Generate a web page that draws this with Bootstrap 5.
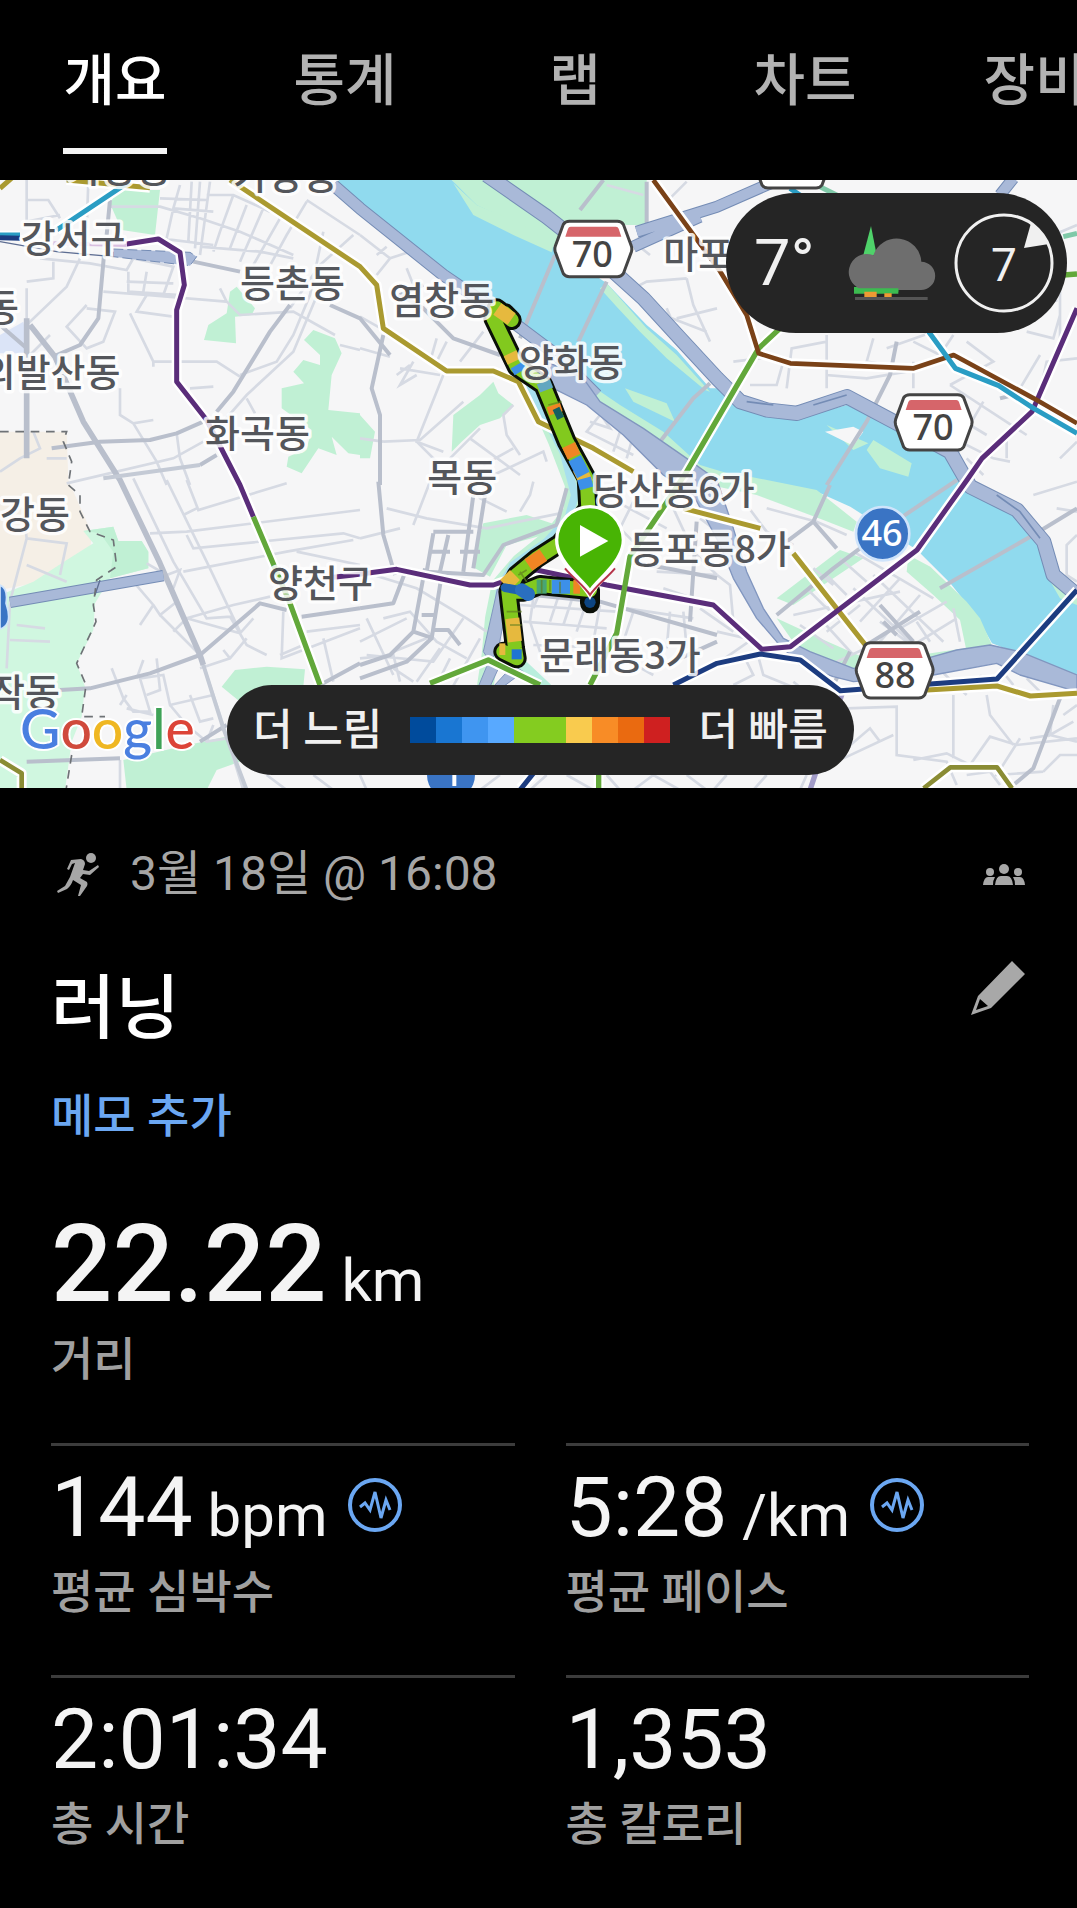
<!DOCTYPE html>
<html lang="ko" data-bs-theme="dark">
<head>
<meta charset="utf-8">
<meta name="viewport" content="width=device-width, initial-scale=1">
<title>러닝</title>
<link rel="stylesheet" href="https://cdn.jsdelivr.net/npm/bootstrap@5.3.0/dist/css/bootstrap.min.css">
<style>
  body { background: #000; color: #f4f4f4; font-family: Roboto, "Noto Sans CJK KR", sans-serif; overflow-x: hidden; }
  .tab-strip { height: 180px; overflow: hidden; }
  .tab-strip .nav-item { flex: 0 0 230px; }
  .tab-strip .nav-link { color: #b2b2b2; font-size: 56px; font-weight: 500; line-height: 84px; padding: 39px 0 25px; border-bottom: 6px solid transparent; border-radius: 0; }
  .tab-strip .nav-link.active { color: #fff; border-bottom-color: #f4f4f4; }
  .map-pane { height: 608px; }
  .map-pane .map-art { display: block; width: 100%; height: 100%; }
  .pill { background: #252525; color: #f0f0f0; border-radius: 70px; }
  .weather { top: 13px; right: 10px; height: 140px; padding: 0 12px 0 28px; gap: 17px; }
  .weather .temp { font-size: 65px; line-height: 70px; width: 75px; }
  .legend { left: 227px; bottom: 13px; height: 90px; padding: 0 26px; gap: 28px; font-size: 43px; font-weight: 500; line-height: 60px; white-space: nowrap; }
  .legend .scale-cell { width: 26px; height: 26px; }
  .details { padding: 47px 48px 40px 51px; }
  .meta-row { color: #a6a6a6; font-size: 48px; line-height: 78px; }
  .meta-row .runner { margin: 0 29px 0 6px; }
  .title-row h1 { font-size: 70px; line-height: 96px; margin: 0; font-weight: 500; }
  .memo-link { color: #6ba7f2; font-size: 46px; font-weight: 500; line-height: 70px; text-decoration: none; }
  .stat-label { color: #a0a0a0; font-size: 46px; font-weight: 500; line-height: 70px; margin: 0; }
  .stat-unit { font-size: 60px; line-height: 60px; }
  .stat-main { font-size: 108px; line-height: 120px; font-weight: 500; margin-top: 53px; }
  .stat-main .stat-unit { font-weight: 400; }
  .stat-value { font-size: 84px; line-height: 98px; }
  .stat-grid { --bs-gutter-x: 51px; margin-top: 49px; }
  .stat-cell { border-top: 3px solid #3c3c3c; height: 232px; padding-top: 13px; }
  .pulse { width: 54px; height: 54px; margin-left: 20px; margin-bottom: 6px; }
  .icon-btn { background: none; border: 0; padding: 0; line-height: 0; color: #a8a8a8; }
  .lbl text { font-family: "Noto Sans CJK KR", sans-serif; font-size: 114px; font-weight: 500; fill: #54565b; stroke: #fff; stroke-width: 20px; stroke-opacity: .85; stroke-linejoin: round; paint-order: stroke; }
  .shield text { font-family: "Noto Sans", sans-serif; font-size: 108px; font-weight: 500; fill: #444; text-anchor: middle; }
  .google text { font-family: Lato, sans-serif; font-size: 166px; font-weight: 500; stroke: #fff; stroke-width: 12px; paint-order: stroke; }
</style>
</head>
<body>
<nav class="tab-strip">
  <ul class="nav flex-nowrap">
    <li class="nav-item d-flex justify-content-center"><a class="nav-link active" aria-current="page" href="#">개요</a></li>
    <li class="nav-item d-flex justify-content-center"><a class="nav-link" href="#">통계</a></li>
    <li class="nav-item d-flex justify-content-center"><a class="nav-link" href="#">랩</a></li>
    <li class="nav-item d-flex justify-content-center"><a class="nav-link" href="#">차트</a></li>
    <li class="nav-item d-flex justify-content-center"><a class="nav-link text-nowrap" href="#">장비</a></li>
  </ul>
</nav>

<section class="map-pane position-relative overflow-hidden">
<svg class="map-art" viewBox="0 15 3231 1824" preserveAspectRatio="xMidYMid slice" fill="none" role="img" aria-label="러닝 경로 지도">
  <defs>
    <g id="hex"><path d="M-72-83H72Q84-83 90-74L114-9Q117 0 114 9L90 74Q84 83 72 83H-72Q-84 83-90 74L-114 9Q-117 0-114-9L-90-74Q-84-83-72-83Z" fill="#fff" stroke="#444" stroke-width="9"/><path d="M-68-67H68Q74-67 76-61L84-37H-84L-76-61Q-74-67-68-67Z" fill="#d6656a"/></g>
  </defs>
  <rect y="0" width="3231" height="1860" fill="#f6f6f7"/>
  <!-- districts and parks -->
  <path d="M0 770H200L205 915 275 1075 270 1140 100 1225 0 1245Z" fill="#f5efe6"/>
  <path d="M0 480 70 440 85 500 70 535H0Z" fill="#dbe4f7"/>
  <path d="M0 1260 100 1220 200 1155 280 1105 250 1068 340 1055 355 1098 425 1098 445 1130V1180L330 1210 285 1285 280 1365 230 1465 255 1535 245 1625 215 1700 195 1845H0Z" fill="#d0f7e0"/>
  <g fill="#c0f0d4">
    <path d="M250 1068 340 1055 355 1098 425 1098 445 1130V1180L330 1210 340 1130 300 1075ZM345 45H480L465 180 365 165 332 90ZM710 335 765 400 755 420 705 425 708 505 612 495 625 450 680 415 690 350ZM940 465 1005 490 1025 535 995 600 985 705 1080 715V840L1045 835 995 785 1010 840 955 820 905 895 860 875 865 845 920 820 935 765 845 700V640L912 625 880 590 910 555 960 570V540L912 495Z"/>
    <path d="M1080 720 1125 770 1110 850H1080ZM1360 720 1400 690 1440 660 1480 620 1495 655 1540 690 1500 730 1440 750 1385 800 1355 830ZM1450 1045 1580 1020 1670 1050 1650 1075 1520 1110 1470 1205 1425 1180 1430 1110ZM665 1535 705 1485 800 1475 915 1483 910 1535 720 1580ZM370 1755 520 1720 700 1680 720 1760 650 1785 620 1845H380Z"/>
    <path d="M1355 15H1940V150L1700 150 1660 215 1560 150 1430 100Z"/>
  </g>
  <!-- river -->
  <path d="M1005 15H1355L1430 90 1560 150 1660 215 1820 325 1940 450 2030 525 2130 640 2151 640 2200 690 2280 720 2376 735 2541 690 2690 760 2850 830 2890 900 2950 960 3050 1030 3120 1110 3150 1190 3231 1265V1505L2976 1405 2931 1325 2851 1225 2751 1125 2551 995 2451 950 2311 920 2151 900 2050 850 1930 760 1790 650 1670 540 1550 460 1330 290 1080 100Z" fill="#90daee"/>
  <g fill="#c0f0d4">
    <path d="M1360 25 1430 90 1560 145 1660 212 1655 232 1540 180 1420 120Z"/>
    <path d="M1820 325 1940 460 2030 540 2130 650 2115 645 2000 550 1920 470 1850 395 1800 340Z"/>
    <path d="M1750 615 1860 690 1990 770 2100 870 2200 900 2250 905 2450 945 2570 1040 2560 1070 2470 1035 2270 960 2130 930 1900 800 1790 680Z"/>
    <path d="M1875 640 2000 685 2025 740 1900 680Z"/>
    <path d="M2600 825 2620 795 2735 865 2725 905 2640 880ZM2480 750 2605 805 2560 825Z"/>
    <path d="M2725 1140 2791 1175 2900 1280 2940 1330 2980 1420 2900 1430 2880 1335 2800 1260 2720 1190ZM2330 1270 2520 1125 2590 1150 2380 1290ZM2330 1330 2460 1390 2620 1460 2960 1410 2980 1430 2640 1510 2500 1490 2400 1430ZM3140 1200 3180 1240 3231 1255V1290L3180 1270Z"/>
  </g>
  <path d="M2475 770 2560 755 2590 770 2560 812Z" fill="#f6f6f7"/>
  <!-- stream beside the running path -->
  <g stroke-linecap="round" stroke-linejoin="round">
    <path d="M1600 640 1670 800 1720 930 1715 1010 1660 1080 1560 1160 1500 1230 1480 1330 1470 1440 1455 1540" stroke="#c0f0d4" stroke-width="50"/>
    <path d="M1590 640 1690 830 1725 960 1705 1030 1640 1100 1540 1170 1500 1240 1490 1330 1475 1440" stroke="#a8dfee" stroke-width="24"/>
    <path d="M1565 1470 1640 1540" stroke="#b9eedd" stroke-width="34"/>
  </g>
  <!-- minor streets -->
  <g stroke="#d6dae3" stroke-width="8">
    <path d="M80 15V140L180 120M80 75H145L180 130M265 20 260 160M330 95H480L600 130 720 170 880 240M540 30 520 100 500 190M575 20 565 200M600 20 585 220M630 20 600 240M480 70 620 75M480 190 640 210M520 100 640 110M700 60 660 170 640 230M740 90 690 220M790 100 720 260M840 130 760 270M920 80 860 180 800 290M1060 180 960 270 870 400M880 250 780 230 600 215M920 75 1080 180M970 170 930 360 880 480 830 560 720 600M620 60 700 60 810 110"/>
    <path d="M120 250 270 265 380 285 400 250 520 275 490 360M385 290V350L540 360M440 290 430 350M380 320 520 325M80 320 160 310V260M80 340 80 450 200 335 240 250M260 390 200 455 260 520 310 500 345 410 260 400M310 350 440 360 680 380 660 340M680 380 720 420 880 410 1005 480M390 415 460 560 650 560 720 605M460 575V560M570 640 640 635M440 360 410 410 520 425M150 480 90 540M360 640V720L400 745 460 735M400 745 470 860 500 930M530 775 540 850 570 930M610 800 520 850 200 925M740 670 765 715M670 740 740 660 880 530 960 340M1020 510 1080 525M100 770 120 820 60 850 0 890M140 850H200"/>
    <path d="M400 910 520 1160 620 1330 690 1325 740 1410 800 1440M500 915 620 1160 720 1370M560 915 595 1005 860 925M550 1020 590 1000M450 1075 560 1070 1080 1005M560 1080 580 1120 1030 1075 1080 1090M550 1190 860 1130 1060 1095M890 1130 1080 1170M560 1330 700 1290 810 1265M70 1000 80 1090 30 1280 20 1480M80 1090 200 1105 180 1200M80 1170 200 1220M50 1350 135 1360M30 1395 150 1400M440 1165 500 1200 540 1185 520 1240M400 1220 460 1290 420 1350M460 1290 480 1320 530 1280M480 1320 600 1440 660 1620 730 1845M520 1370 560 1330 720 1375 760 1330M600 1480 690 1450 740 1390M690 1450 670 1425M335 1480 370 1570 400 1610 450 1610 420 1510 490 1500 510 1590 640 1560M430 1455 410 1510M360 1590 380 1560M440 1560 480 1545 470 1450M510 1590 560 1650 620 1700 680 1690M570 1560 600 1640 640 1630M850 1310 845 1450 1080 1360M920 1370 1080 1350M970 1390 1000 1520M840 1440 910 1410M360 1755V1845M380 1600 460 1620M640 1650 620 1700"/>
    <path d="M1080 180 1170 250 1230 230M1130 300 1170 250M1160 215 1130 240M1220 280 1240 330M1080 425 1160 470M1080 520 1170 545M1240 560 1200 630 1250 600M1190 600 1230 570M1200 580 1320 600M1310 490 1290 560M1340 500 1310 560M1450 470 1380 560M1330 600 1250 800 1330 830M1150 800 1260 795 1390 680M1540 690 1510 720 1520 780 1560 840M1250 800 1310 860M1080 790 1150 800M1350 850 1440 760M1410 790 1560 900M1450 870 1540 820M1480 900 1630 830 1640 860M1800 720 1760 770 1900 840M1860 770 1840 830M1900 780 1880 850M1770 740 1830 760 1790 700M1890 330 2000 420 2080 540M1900 340 1940 320 2060 310M1990 420 2120 470M2030 430 2151 400M2060 310 2080 390 2130 500M2000 400 2060 540M1930 180 1900 200 1950 240M2060 20 2000 80M1820 30 1930 60"/>
    <path d="M2200 560 2280 550 2260 480M2360 640 2375 520 2480 500 2480 640M2250 630 2330 630 2350 560M2480 480V600L2600 610 2720 590M2620 490 2600 560 2720 580M2660 520 2800 470M2740 500 2820 540 2860 480M2740 640V560M2850 630 2980 560 2900 500M2850 630 3080 780M2800 680 2860 720 2960 780M2890 720 2820 790M2950 680 2880 800 2980 850 3030 860M3020 770V850M3120 540 3060 640M3180 490 3180 340 3120 200 3060 120M3120 260 3170 380M3080 470 3160 490 3180 420M3231 150 3160 180M2900 850 2950 900M3231 550 3140 560 3120 650M3180 850 3231 800M2850 860 2900 800"/>
    <path d="M1160 1000 1280 1030 1460 1060 1680 1015M1290 920 1240 1050M1600 920 1590 960 1560 1010M1410 920 1440 970 1520 1010M1080 1090 1200 1060M1120 1200 1250 1240 1400 1330 1460 1370M1100 1330 1180 1500M1150 1330 1230 1310 1310 1400 1400 1450M1080 1400 1220 1330M1100 1440 1300 1460 1390 1330M1280 1390 1180 1430M1320 1420 1250 1520M1350 1450 1310 1530M1440 1390 1350 1550M1180 1480 1240 1520M1080 1450 1180 1440 1200 1520M1500 1290V1400M1600 1270 1590 1340 1640 1490M1560 1290 1850 1310M1620 1250 1600 1300M1680 1250 1650 1340M1720 1260 1690 1350M1760 1280 1730 1370M1570 1340 1700 1350 1820 1360M1800 1290 1780 1400M1900 1310 1870 1400M1880 1300 2080 1330M2010 1310 2000 1420M2050 1310 2060 1420M1900 980 1860 1060 1900 1100M1850 980 2000 1060M2020 1000 2080 1130 2151 1200M1970 1190 2151 1200M2100 1300 2200 1370M2120 1100 2160 1150M1990 1240 2110 1280M2100 1030 2140 1060M1870 1450 1960 1500M1600 1410 1870 1420M1650 1400 1640 1500"/>
    <path d="M2300 1000 2450 1040 2540 1080M2240 990 2300 1070 2380 1110M2420 1240 2470 1290 2540 1350M2580 1290 2480 1370M2400 1260 2480 1200 2540 1260M2440 1180 2500 1230M2520 1150 2600 1220M2560 1130 2800 1270M2700 1210 2580 1340M2760 1260 2640 1400 2510 1460M2840 1280 2700 1360M2870 1330 2740 1410 2600 1470M2460 1330 2560 1440M2560 1240 2900 1560M2620 1200 2830 1400M2640 1340 2720 1400M2400 1350 2500 1420M2380 1320 2700 1250M2860 1300 2880 1400M2750 1340 2790 1400"/>
    <path d="M2151 1370 2240 1390M2160 1460 2260 1390 2290 1500 2400 1545M2200 1530 2260 1500 2240 1460M2200 1340 2190 1230 2151 1200M2380 1520 2480 1600 2530 1590M2540 1600 2690 1595V1740L2840 1760 2870 1830M2740 1755 2840 1735 2910 1770 2970 1685 3050 1710 3231 1690M2860 1560V1750M2960 1560 2970 1620 3040 1710M3231 1700 3150 1680 3090 1690M3060 1690 2990 1800 3130 1790M2680 1680 2530 1750M2540 1720 2610 1660 2640 1700M3000 1830 2970 1790 2900 1800M3130 1790 3180 1740 3231 1740M3190 1620 3231 1590M3160 1590 3150 1680 3220 1640M2940 1500 2960 1540M3080 1510 3130 1560M3000 1480 3040 1530M3231 1080 3200 1110V1200L3231 1220M3100 960 3231 920M3170 1000 3231 1010"/>
    <path d="M1500 1800 1440 1845M1640 1800 1590 1845M1700 1800 1780 1845M1820 1800 1860 1845M1900 1845 1960 1800 2040 1845M2060 1800 2120 1845M2180 1800 2140 1845M1320 1800 1340 1845M1080 1800 1100 1845M800 1800 860 1845M940 1800 1000 1845M2300 1800 2260 1845M2420 1800 2400 1845"/>
  </g>
  <!-- main streets -->
  <g stroke="#b9bfcc" stroke-width="12" stroke-linejoin="round">
    <path d="M330 75 320 180M312 240 295 430 240 510 160 545M0 450 80 520M580 260 720 290M990 390 1080 430 1170 540M870 390 810 470 700 650 650 710"/>
    <path d="M155 820 300 800 450 795 530 775 610 740M650 840 600 870M180 1545 270 1540 450 1495 600 1440 780 1285 860 1305M905 1325 1080 1300M960 1530 1080 1465M80 1760 360 1750M600 1700 680 1650"/>
    <path d="M1135 920 1150 1080 1185 1200M1150 480 1115 640 1140 720 1140 930M1080 1300 1180 1285 1220 1180M1420 960 1390 1190M1455 960 1420 1180M1300 1070H1420M1300 1075 1280 1190 1450 1200 1510 1110 1670 1050 1700 940M1345 1080 1320 1190M1285 1130H1350M1380 1130H1440M1275 1180 1240 1370 1170 1440 1080 1470M1325 1200 1295 1390 1220 1460 1080 1510M1265 1320H1310M1240 1370 1300 1390M1295 1365H1345L1380 1410M1270 330 1200 360 1270 400 1360 490 1500 540M1600 1260 1800 1280 2151 1380M2090 1040 2070 1340M2151 1210 2000 1180 1880 1160M2040 1450 2151 1400"/>
    <path d="M1810 15 1740 105M1665 240 1560 490M1820 320 1735 500M2130 625 2080 670 1980 800M1940 20V150M2690 500 2670 600 2600 740 2480 930M2490 930 2440 1040 2360 1100M2440 1040 2510 1120M3231 1000 3100 1080 2820 1240M2871 915 2700 1030 2500 1180 2330 1320M3180 1570 3100 1780 3040 1830M2640 1290 2740 1400M2760 1310 2600 1410M2650 1340 2690 1380M2550 1430 2500 1530M3000 670 3080 650"/>
    <path d="M80 430V850M90 450 165 545 250 740 360 915 480 1165 600 1440 610 1470" stroke-width="17"/>
    <path d="M610 1470 670 1660 740 1845M600 870 310 910" stroke-width="12" stroke="#c4cad5"/>
  </g>
  <!-- expressways -->
  <g stroke-linejoin="round">
    <g stroke="#748cb5">
      <path d="M1000 30 1080 100 1330 300 1550 450 1670 540 1790 660" stroke-width="38"/>
      <path d="M1460 0 1640 125 1780 235 1930 370 2040 490 2151 610 2221 680 2301 705 2391 715 2541 665 2691 745 2850 830 2890 900 2911 935 3051 1005 3131 1100 3160 1200 3231 1260" stroke-width="46"/>
      <path d="M1910 170 2151 95 2300 30 2351 10M1900 215 2100 125M3000 60 3040 10" stroke-width="36"/>
      <path d="M30 1282 490 1202" stroke-width="34" stroke-linecap="butt"/>
    </g>
    <g stroke="#a9b9d8">
      <path d="M1000 30 1080 100 1330 300 1550 450 1670 540 1790 660" stroke-width="32"/>
      <path d="M1460 0 1640 125 1780 235 1930 370 2040 490 2151 610 2221 680 2301 705 2391 715 2541 665 2691 745 2850 830 2890 900 2911 935 3051 1005 3131 1100 3160 1200 3231 1260" stroke-width="40"/>
      <path d="M1910 170 2151 95 2300 30 2351 10M1900 215 2100 125M3000 60 3040 10" stroke-width="30"/>
      <path d="M30 1282 490 1202" stroke-width="28"/>
    </g>
    <path d="M1640 560 1750 610 1800 680 1930 760 2060 850 2151 915 2200 1060 2240 1190 2290 1300 2350 1390 2430 1430 2560 1480 2780 1450 2870 1425 2970 1410 3060 1430 3231 1500V1550L3060 1500 2990 1465 2800 1500 2560 1520 2500 1505 2400 1470 2330 1400 2270 1330 2200 1210 2160 1110 2080 960 1990 900 1870 780 1760 690 1660 640Z" fill="#a9b9d8" stroke="#8196bf" stroke-width="4"/>
    <path d="M1495 1230 1515 1320 1495 1420 1470 1460 1450 1430ZM1470 1450 1500 1470 1470 1535H1435ZM1540 1470 1480 1535H1510L1570 1490Z" fill="#a9b9d8" stroke="#8196bf" stroke-width="3"/>
    <path d="M340 222 570 232 590 245 570 272 340 245Z" fill="#a9b9d8" stroke="#748cb5" stroke-width="3" stroke-dasharray="30 12"/>
    <path d="M0 200 170 230 340 245M300 1215 285 1260" stroke="#5d6d92" stroke-width="4"/>
    <path d="M2530 1545 2430 1845" stroke="#a29cc8" stroke-width="16"/>
    <path d="M2240 680 2320 690M2440 690 2540 660M2990 960 3060 1010 3120 1090" stroke="#748cb5" stroke-width="5"/>
  </g>
  <path d="M0 770H200L190 800 215 860 205 930 240 960 240 1010 270 1070 340 1095 350 1175 290 1215 280 1290 288 1340 230 1465 258 1530 245 1625H315M215 1740 198 1845" stroke="#6e7276" stroke-width="5" stroke-dasharray="26 20"/>
  <!-- subway lines, each drawn over a white casing -->
  <g stroke-linejoin="round">
    <g stroke="#fff" stroke-width="30">
      <path d="M690 15 1080 275 1130 330 1150 460 1340 588H1480L1555 620 1615 740 1780 820 1900 890M2050 1000 2281 1060M2380 1135 2600 1415M2781 1545 2991 1533 3091 1563 3231 1555"/>
      <path d="M380 207 475 192 540 232 553 330 530 405V620L620 735 720 930 760 1025 870 1285 960 1530M1060 1200 1190 1183 1410 1230 1480 1230 1610 1185 1820 1230 2140 1290 2286 1423 2371 1415 2751 1125 2901 915 2946 850 3096 710 3231 400"/>
      <path d="M1290 1525 1465 1455 1620 1530M1770 1530 1850 1375 1890 1145 1995 990 2060 890 2200 650 2276 520 2340 460"/>
      <path d="M1960 15 2161 290 2240 420 2276 535 2371 565 2741 580 2861 540 3101 670 3231 745M2786 470 2866 580 2996 632 3101 700 3231 775"/>
      <path d="M2020 1530 2151 1465 2281 1437 2401 1455 2521 1547 2991 1512 3231 1245M2771 1840 2851 1777H2991L3036 1840M0 1755 65 1795V1840M0 182H60M170 165 380 25M200 15 450 38M1560 1840 1600 1800M1796 1845V1800"/>
    </g>
    <g stroke="#aa9a30" stroke-width="15"><path d="M690 15 1080 275 1130 330 1150 460 1340 588H1480L1555 620 1615 740 1780 820 1900 890M2050 1000 2281 1060M2380 1135 2600 1415M2781 1545 2991 1533 3091 1563 3231 1555M0 40 40 5M200 15 450 38"/></g>
    <path d="M380 207 475 192 540 232 553 330 530 405V620L620 735 720 930 760 1025M1000 1207 1060 1200 1190 1183 1410 1230 1480 1230 1610 1185 1820 1230 2140 1290 2286 1423 2371 1415 2751 1125 2901 915 2946 850 3096 710 3231 400" stroke="#5a2d7a" stroke-width="15"/>
    <path d="M160 205 380 210" stroke="#d9bfe0" stroke-width="12"/>
    <path d="M760 1025 870 1285 960 1530M1290 1525 1465 1455 1620 1530M1770 1530 1850 1375 1890 1145 1995 990 2060 890 2200 650 2276 520 2340 460M3190 300 3231 297M1796 1845V1800" stroke="#62a83a" stroke-width="16"/>
    <path d="M1960 15 2161 290 2240 420 2276 535 2371 565 2741 580 2861 540 3101 670 3231 745" stroke="#7a4218" stroke-width="14"/>
    <path d="M2786 470 2866 580 2996 632 3101 700 3231 775M0 180H60M170 165 380 25M2370 40 2400 60" stroke="#2a9dc4" stroke-width="15"/>
    <path d="M3190 185 3231 175M2460 35 2540 75" stroke="#80c9a8" stroke-width="15"/>
    <path d="M2020 1530 2151 1465 2281 1437 2401 1455 2521 1547 2991 1512 3231 1245M1560 1845 1600 1795M0 188 60 190" stroke="#1c3c80" stroke-width="15"/>
    <path d="M2771 1840 2851 1777H2991L3036 1840M0 1755 65 1795V1840" stroke="#8a8c34" stroke-width="14"/>
  </g>
  <!-- running track -->
  <g stroke-linejoin="round">
    <path d="M1490 400 1535 435 1515 415 1480 430 1550 575 1630 630 1700 800 1760 910 1765 1000 1680 1105 1610 1150 1550 1200 1525 1250 1545 1420 1550 1450 1510 1430 1550 1450M1535 1250 1570 1250 1620 1230 1770 1245 1770 1285" stroke="#0a0f08" stroke-width="60" stroke-linecap="round"/>
    <path d="M1490 400 1535 435 1515 415 1480 430 1550 575 1630 630 1700 800 1760 910 1765 1000 1680 1105 1610 1150 1550 1200 1525 1250 1545 1420 1550 1450 1510 1430 1550 1450M1535 1250 1570 1250 1620 1230 1770 1245" stroke="#82c91e" stroke-width="42" stroke-linecap="round"/>
  </g>
  <g stroke-width="42">
    <path d="M1492 402 1535 432M1530 535 1542 560M1738 880 1760 925M1515 1230 1545 1200M1537 1330 1545 1400" stroke="#e6b93e"/>
    <path d="M1507 1405V1440" stroke="#e6b93e" stroke-width="18"/>
    <path d="M1660 690 1668 715M1706 810 1722 845M1585 1170 1630 1140M1720 1235H1740" stroke="#f08524"/>
    <path d="M1550 570 1562 590M1724 850 1750 900M1752 910 1760 940M1655 1235H1710" stroke="#3d90e8"/>
    <path d="M1668 700 1682 730" stroke="#155f60" stroke-width="22"/>
    <path d="M1630 620 1640 645" stroke="#62a7c0"/>
    <path d="M1515 1238 1590 1252" stroke="#1f62b0" stroke-width="26" stroke-linecap="round"/>
    <path d="M1565 1245 1585 1258" stroke="#2a6fc0" stroke-width="40" stroke-linecap="round"/>
    <path d="M1610 1235H1640" stroke="#48a574"/>
    <path d="M1535 1438H1565" stroke="#1f74d2" stroke-width="30"/>
    <circle cx="1770" cy="1282" r="17" fill="#0c4582" stroke="none"/>
  </g>
  <g stroke="#5f7d20" stroke-width="5" opacity=".7"><path d="M1520 1310H1565M1530 1350H1565M1560 1190 1580 1220M1740 1010 1780 1015M1645 690 1685 680M1555 1200 1580 1185M1680 1220V1255M1650 1215V1250M1625 1215V1255"/></g>
  <!-- start marker -->
  <path d="M1770 1275C1745 1225 1665 1165 1665 1095A105 105 0 0 1 1875 1095C1875 1165 1795 1225 1770 1275Z" fill="#fff"/>
  <path d="M1695 1180C1720 1210 1755 1235 1770 1260 1785 1235 1820 1210 1845 1180" stroke="#b5344a" stroke-width="6"/>
  <path d="M1770 1240C1745 1205 1675 1155 1675 1095A95 95 0 0 1 1865 1095C1865 1155 1795 1205 1770 1240Z" fill="#48b404"/>
  <path d="M1740 1050 1825 1098 1740 1145Z" fill="#fff"/>
  <!-- route shields -->
  <g class="shield">
    <use href="#hex" x="1780" y="222"/><text x="1777" y="276">70</text>
    <use href="#hex" x="2801" y="742"/><text x="2799" y="796">70</text>
    <use href="#hex" x="2684" y="1486"/><text x="2685" y="1539">88</text>
    <use href="#hex" x="2376" y="-44"/>
    <circle cx="2648" cy="1076" r="80" fill="#3a74c4" stroke="#cfe4fb" stroke-width="8"/><text x="2646" y="1114" style="fill:#fff">46</text>
    <circle cx="1353" cy="1800" r="72" fill="#3a74c4"/><path d="M1363 1790V1833" stroke="#fff" stroke-width="12"/>
    <path d="M0 1230Q25 1240 18 1285 40 1350 0 1362Z" fill="#3a74c4" stroke="#cfe4fb" stroke-width="5"/>
  </g>
  <g class="lbl">
    <text x="62" y="231">강서구</text>
    <text x="720" y="367">등촌동</text>
    <text x="-48" y="437">동</text>
    <text x="-58" y="633">의발산동</text>
    <text x="615" y="817">화곡동</text>
    <text x="1168" y="418">염창동</text>
    <text x="1557" y="603">양화동</text>
    <text x="1990" y="279">마포구</text>
    <text x="1282" y="947">목동</text>
    <text x="1780" y="986">당산동6가</text>
    <text x="1888" y="1163">등포동8가</text>
    <text x="0" y="1060">강동</text>
    <text x="804" y="1267">양천구</text>
    <text x="-30" y="1594">작동</text>
    <text x="1618" y="1481">문래동3가</text>
    <text x="200" y="22">가양동</text>
    <text x="700" y="42">가양동</text>
  </g>
  <g class="google"><text x="60" y="1722"><tspan fill="#4a7fe0">G</tspan><tspan fill="#d04a3c">o</tspan><tspan fill="#efb722">o</tspan><tspan fill="#4a7fe0">g</tspan><tspan fill="#3fa257">l</tspan><tspan fill="#dc4438">e</tspan></text></g>
</svg>

  <div class="pill weather position-absolute d-flex align-items-center">
    <span class="temp">7°</span>
    <svg width="90" height="74" viewBox="388 153 270 222" aria-hidden="true">
      <path d="M463 153 480 240H440Z" fill="#4fd26a"/>
      <path d="M412 336H545V356H412Z" fill="#3cbb50"/><path d="M443 348H480V367H443ZM503 355H525V367H503Z" fill="#ee9a33"/>
      <path d="M445 345A54 54 0 1 1 470 241 74 74 0 0 1 614 260 42 42 0 0 1 612 345Z" fill="#6e6e6e"/>
      <path d="M412 340H545V350H412Z" fill="#3cbb50"/>
      <path d="M415 366H633V375H415Z" fill="#555"/>
    </svg>
    <svg width="102" height="102" viewBox="-51 -51 102 102" role="img" aria-label="바람 7">
      <circle r="48" fill="none" stroke="#f0f0f0" stroke-width="3"/>
      <path d="M27-40 20-15 45-19A49 49 0 0 0 27-40Z" fill="#f0f0f0"/>
      <text x="0" y="18" text-anchor="middle" font-size="46" fill="#f0f0f0">7</text>
    </svg>
  </div>

  <div class="pill legend position-absolute d-flex align-items-center">
    <span>더 느림</span>
    <div class="d-flex">
      <span class="scale-cell" style="background:#004b9c"></span><span class="scale-cell" style="background:#1976d2"></span><span class="scale-cell" style="background:#3f95f0"></span><span class="scale-cell" style="background:#58a9ff"></span><span class="scale-cell" style="background:#84cc20"></span><span class="scale-cell" style="background:#84cc20"></span><span class="scale-cell" style="background:#f9cb4e"></span><span class="scale-cell" style="background:#f88c26"></span><span class="scale-cell" style="background:#ea6a10"></span><span class="scale-cell" style="background:#cf2020"></span>
    </div>
    <span>더 빠름</span>
  </div>
</section>

<main class="details">
  <div class="meta-row d-flex align-items-center">
    <svg class="runner" width="44" height="44" viewBox="0 0 44 44" fill="#a6a6a6" aria-hidden="true">
      <circle cx="34" cy="6" r="5"/>
      <path d="M14 8 24 7Q28 8 28 12L26 18 32 19 41 13 42 15 33 23 26 22 23 26 30 30Q31 32 30 34L23 44H21L24 33 16 28Q14 34 10 37L1 41 0 39 8 34 13 25 18 11 15 12 12 18 10 17Z"/>
    </svg>
    <span>3월 18일 @ 16:08</span>
    <svg class="ms-auto me-1" width="42" height="22" viewBox="0 0 42 22" fill="#a8a8a8" role="img" aria-label="공개">
      <circle cx="21" cy="6" r="5"/><circle cx="7" cy="9" r="4"/><circle cx="35" cy="9" r="4"/>
      <path d="M12 22Q13 13 18 13H24Q29 13 30 22ZM0 22Q1 14 5 14H12Q10 17 10 22ZM42 22Q41 14 37 14H30Q32 17 32 22Z"/>
    </svg>
  </div>
  <div class="title-row d-flex justify-content-between align-items-start mt-5">
    <h1>러닝</h1>
    <button class="icon-btn me-1" type="button" aria-label="편집">
      <svg width="54" height="54" viewBox="0 0 54 54" fill="currentColor"><path fill-rule="evenodd" d="M41 0 54 13 20 47 0 54 7 35ZM9 38 5 49 17 45Z"/></svg>
    </button>
  </div>
  <div class="mt-4"><a class="memo-link" href="#">메모 추가</a></div>

  <div class="stat-main">22.22<span class="stat-unit"> km</span></div>
  <p class="stat-label">거리</p>

  <div class="row stat-grid">
    <div class="col-6"><div class="stat-cell">
      <div class="stat-value d-flex align-items-center"><span>144<span class="stat-unit"> bpm</span></span>
        <svg class="pulse" viewBox="0 0 54 54" fill="none" stroke="#6ba7f2" aria-hidden="true"><circle cx="27" cy="27" r="25" stroke-width="4"/><path d="M12 29 17 25 22 32 27 14 33 40 38 22 42 32" stroke-width="3"/></svg>
      </div>
      <p class="stat-label">평균 심박수</p>
    </div></div>
    <div class="col-6"><div class="stat-cell">
      <div class="stat-value d-flex align-items-center"><span>5:28<span class="stat-unit"> /km</span></span>
        <svg class="pulse" viewBox="0 0 54 54" fill="none" stroke="#6ba7f2" aria-hidden="true"><circle cx="27" cy="27" r="25" stroke-width="4"/><path d="M12 29 17 25 22 32 27 14 33 40 38 22 42 32" stroke-width="3"/></svg>
      </div>
      <p class="stat-label">평균 페이스</p>
    </div></div>
    <div class="col-6"><div class="stat-cell">
      <div class="stat-value">2:01:34</div>
      <p class="stat-label">총 시간</p>
    </div></div>
    <div class="col-6"><div class="stat-cell">
      <div class="stat-value">1,353</div>
      <p class="stat-label">총 칼로리</p>
    </div></div>
  </div>
</main>
<script src="https://cdn.jsdelivr.net/npm/bootstrap@5.3.0/dist/js/bootstrap.bundle.min.js"></script>
</body>
</html>
